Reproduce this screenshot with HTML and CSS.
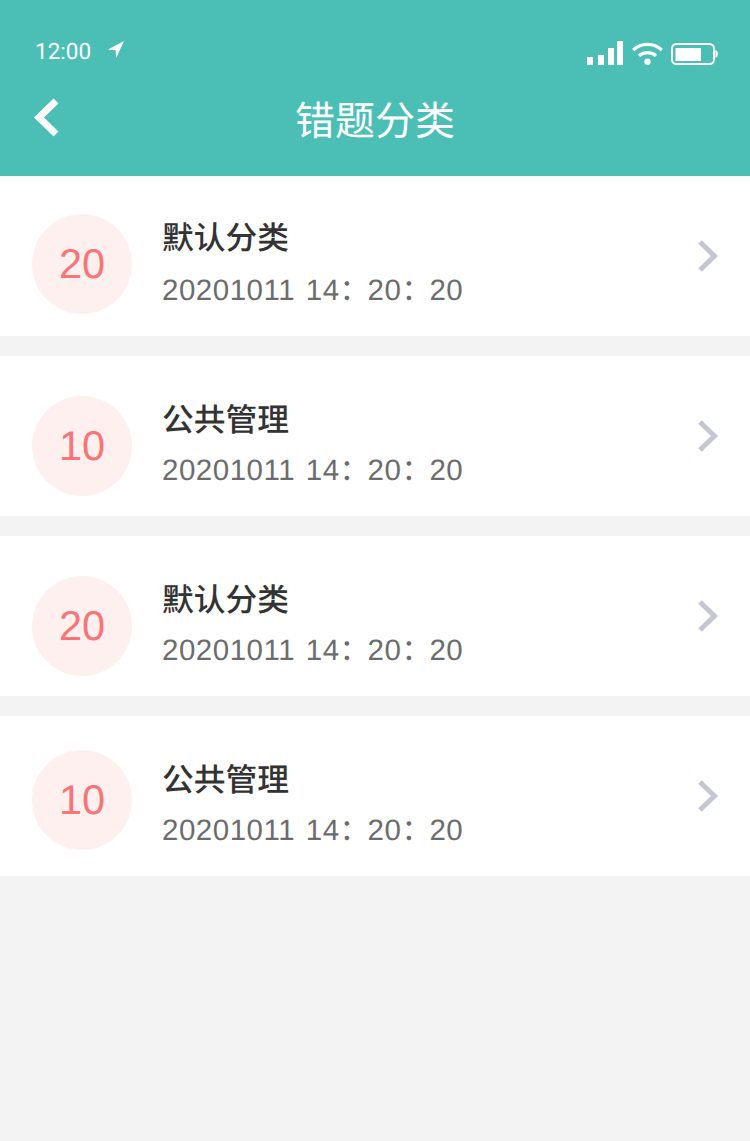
FILE: index.html
```html
<!DOCTYPE html>
<html lang="zh">
<head>
<meta charset="utf-8">
<title>错题分类</title>
<link rel="stylesheet" href="styles.css">
</head>
<body>
<div class="page">
  <header class="header">
    <div class="status">
      <div class="status-left">
        <span class="time">12:00</span>
        <svg class="loc" width="18" height="18" viewBox="0 0 18 18"><path d="M17 1 L1 9.5 L8.6 10.2 L9.2 18 Z" fill="#fff"/></svg>
      </div>
      <div class="status-right">
        <svg width="36" height="26" viewBox="0 0 36 26"><g fill="#fff"><rect x="0" y="17" width="6" height="8"/><rect x="11" y="15" width="6" height="10"/><rect x="21" y="8" width="6" height="17"/><rect x="30" y="1" width="6" height="24"/></g></svg>
        <svg width="31" height="26" viewBox="0 0 31 26"><g fill="none" stroke="#fff" stroke-width="3.2"><path d="M1.200 10 C9 2.500 22 2.500 29.800 10"/><path d="M7 15.800 C11.500 11.500 19.500 11.500 24 15.800"/></g><circle cx="15.500" cy="21.800" r="3.200" fill="#fff"/></svg>
        <svg width="47" height="26" viewBox="0 0 47 26"><rect x="1" y="4" width="42" height="20" rx="4.5" fill="none" stroke="#fff" stroke-width="2"/><rect x="4.500" y="8" width="25.500" height="13" fill="#fff"/><path d="M44.500 10 C46 10.500 46.800 12 46.800 14 C46.800 16 46 17.500 44.500 18 Z" fill="#fff"/></svg>
      </div>
    </div>
    <div class="nav">
      <svg class="back" width="28" height="40" viewBox="0 0 28 40"><path d="M24 3 L7 19.500 L24 36" fill="none" stroke="#fff" stroke-width="7"/></svg>
      <h1 class="title">错题分类</h1>
    </div>
  </header>
  <main class="list">
    <section class="row row-first">
      <div class="badge">20</div>
      <div class="info"><div class="name">默认分类</div><div class="date">20201011 14<span class="sep">：</span>20<span class="sep">：</span>20</div></div>
      <svg class="chev" width="22" height="34" viewBox="0 0 22 34"><path d="M3 3 L17.500 17 L3 31" fill="none" stroke="#c4c7d3" stroke-width="5"/></svg>
    </section>
    <section class="row">
      <div class="badge">10</div>
      <div class="info"><div class="name">公共管理</div><div class="date">20201011 14<span class="sep">：</span>20<span class="sep">：</span>20</div></div>
      <svg class="chev" width="22" height="34" viewBox="0 0 22 34"><path d="M3 3 L17.500 17 L3 31" fill="none" stroke="#c4c7d3" stroke-width="5"/></svg>
    </section>
    <section class="row">
      <div class="badge">20</div>
      <div class="info"><div class="name">默认分类</div><div class="date">20201011 14<span class="sep">：</span>20<span class="sep">：</span>20</div></div>
      <svg class="chev" width="22" height="34" viewBox="0 0 22 34"><path d="M3 3 L17.500 17 L3 31" fill="none" stroke="#c4c7d3" stroke-width="5"/></svg>
    </section>
    <section class="row row-last">
      <div class="badge">10</div>
      <div class="info"><div class="name">公共管理</div><div class="date">20201011 14<span class="sep">：</span>20<span class="sep">：</span>20</div></div>
      <svg class="chev" width="22" height="34" viewBox="0 0 22 34"><path d="M3 3 L17.500 17 L3 31" fill="none" stroke="#c4c7d3" stroke-width="5"/></svg>
    </section>
  </main>
</div>
</body>
</html>
```
FILE: styles.css
```css
* { box-sizing: border-box; }
html, body { margin: 0; padding: 0; }
body {
  background: #f3f3f3;
  font-family: "Liberation Sans", "Noto Sans CJK SC", sans-serif;
  text-rendering: geometricPrecision;
}
.page { width: 750px; min-height: 1141px; background: #f3f3f3; }
.header { height: 176px; background: #4bbfb5; color: #fff; padding-top: 37px; }
.status {
  height: 28px;
  display: flex;
  justify-content: space-between;
  align-items: center;
  padding: 0 32px 0 35px;
}
.status-left { display: flex; align-items: center; }
.time { font-family: Roboto, sans-serif; font-size: 22.500px; line-height: 28px; width: 72px; margin-top: 2px; }
.loc { margin-top: -4px; }
.status-right { display: flex; align-items: center; gap: 9px; margin-top: 4px; }
.status-right svg:last-child { margin-left: -1px; }
.nav { position: relative; height: 72px; margin-top: 19px; display: flex; justify-content: center; align-items: center; }
.back { position: absolute; left: 32px; top: 14px; }
.title { margin: 0; font-size: 40px; font-weight: 400; line-height: 72px; margin-top: -4px; font-family: "Noto Sans CJK SC", sans-serif; }
.list { display: flex; flex-direction: column; gap: 20px; }
.row {
  height: 160px;
  background: #fff;
  display: flex;
  align-items: flex-start;
  padding: 40px 32px 0;
}
.badge {
  width: 100px;
  height: 100px;
  flex: none;
  border-radius: 50%;
  background: #fff0f0;
  color: #f87476;
  font-size: 41.500px;
  line-height: 100px;
  text-align: center;
}
.row-first { padding-top: 38px; }
.row-last { padding-top: 34px; }
.info { margin-left: 30px; flex: 1; margin-top: -1px; }
.row-last .info { margin-top: 5px; }
.name {
  height: 46px;
  font-size: 31.750px;
  line-height: 46px;
  font-weight: 500;
  color: #333;
  font-family: "Noto Sans CJK SC", sans-serif;
}
.date { margin-top: 10px; font-size: 29.500px; letter-spacing: 0.5px; word-spacing: 2px; line-height: 40px; color: #6c6c6c; white-space: nowrap; }
.sep { letter-spacing: -1.500px; }
.row-first .date { margin-top: 12px; }
.chev { flex: none; margin-top: 23px; margin-right: -1px; }
.row-first .chev { margin-top: 25px; }
.row-last .chev { margin-top: 29px; }
```
